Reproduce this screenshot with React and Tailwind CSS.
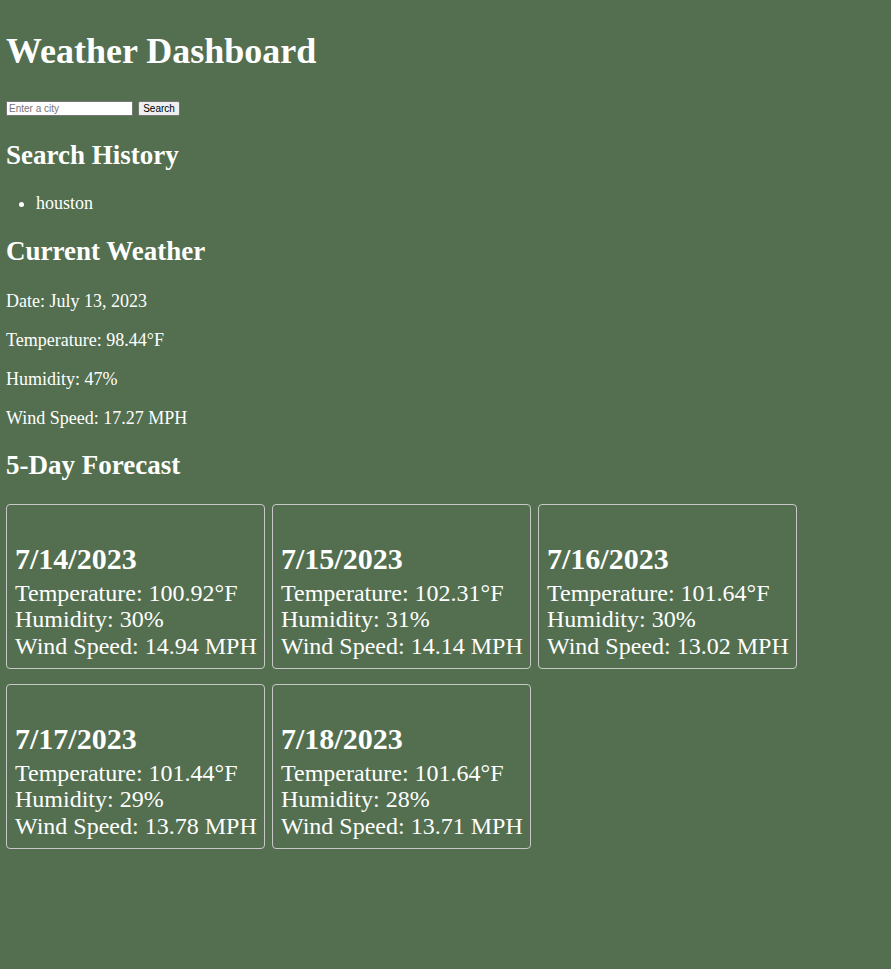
export default function App() {
  const serif = { fontFamily: '"Liberation Serif", "Times New Roman", serif' };
  const days = [
    ["7/14/2023", "100.92", "30", "14.94"],
    ["7/15/2023", "102.31", "31", "14.14"],
    ["7/16/2023", "101.64", "30", "13.02"],
    ["7/17/2023", "101.44", "29", "13.78"],
    ["7/18/2023", "101.64", "28", "13.71"],
  ];
  return (
    <div className="min-h-[969px] w-full bg-[#536f50] text-white px-[6px] pt-[31px] pb-8" style={serif}>
      <h1 className="text-[36px] font-bold leading-[41.4px]">Weather Dashboard</h1>
      <div className="mt-[29px] flex items-center gap-[5px] h-[15px]">
        <input
          type="text"
          placeholder="Enter a city"
          className="w-[127px] h-[15px] border border-[#767676] bg-white px-[2px] text-[10px] leading-[13px] text-black placeholder:text-[#757575] outline-none"
          style={{ fontFamily: '"Liberation Sans", Arial, sans-serif' }}
        />
        <button
          className="w-[42px] h-[15px] border border-[#767676] bg-[#efefef] rounded-[2px] text-[10px] leading-[13px] text-black flex items-center justify-center"
          style={{ fontFamily: '"Liberation Sans", Arial, sans-serif' }}
        >
          Search
        </button>
      </div>
      <h2 className="mt-[23.4px] text-[27px] font-bold leading-[31px]">Search History</h2>
      <ul className="mt-[22.2px] pl-[30px] list-disc text-[18px] leading-[20.7px]">
        <li>houston</li>
      </ul>
      <h2 className="mt-[22.1px] text-[27px] font-bold leading-[31px]">Current Weather</h2>
      <div className="mt-[24.2px] flex flex-col gap-[18.3px] text-[18px] leading-[20.7px]">
        <p>Date: July 13, 2023</p>
        <p>Temperature: 98.44°F</p>
        <p>Humidity: 47%</p>
        <p>Wind Speed: 17.27 MPH</p>
      </div>
      <h2 className="mt-[21.4px] text-[27px] font-bold leading-[31px]">5-Day Forecast</h2>
      <div className="mt-[22.8px] flex flex-wrap gap-x-[7px] gap-y-[15px] w-[800px]">
        {days.map(([d, t, h, w]) => (
          <div key={d} className="w-[259px] h-[165px] border border-[#c8c8c8] rounded-[4px] pl-[8px] pr-[2px] pt-[11px] whitespace-nowrap">
            <div className="mt-[25px] text-[30px] font-bold leading-[35px]">{d}</div>
            <div className="mt-[4px] text-[24px] leading-[26.5px]">
              <div>Temperature: {t}°F</div>
              <div>Humidity: {h}%</div>
              <div>Wind Speed: {w} MPH</div>
            </div>
          </div>
        ))}
      </div>
    </div>
  );
}
